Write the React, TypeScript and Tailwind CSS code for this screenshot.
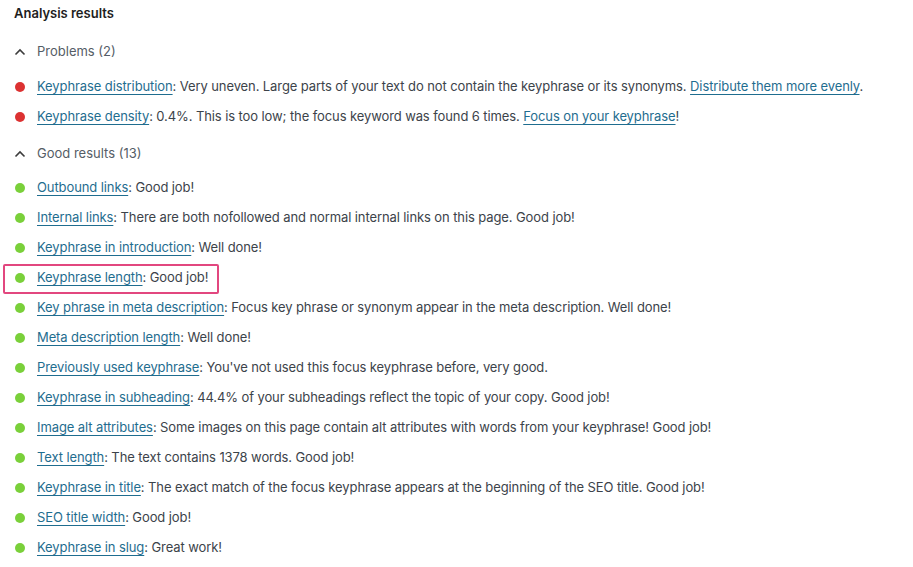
import React from "react";

type Item = { link: string; text: React.ReactNode; highlight?: boolean };

const L = ({ children }: { children: React.ReactNode }) => (
  <a className="text-[#1f6d8f] underline underline-offset-[3px] decoration-[1px]">{children}</a>
);

const problems: Item[] = [
  {
    link: "Keyphrase distribution",
    text: (
      <>
        : Very uneven. Large parts of your text do not contain the keyphrase or its synonyms.{" "}
        <L>Distribute them more evenly</L>.
      </>
    ),
  },
  {
    link: "Keyphrase density",
    text: (
      <>
        : 0.4%. This is too low; the focus keyword was found 6 times. <L>Focus on your keyphrase</L>!
      </>
    ),
  },
];

const good: Item[] = [
  { link: "Outbound links", text: ": Good job!" },
  { link: "Internal links", text: ": There are both nofollowed and normal internal links on this page. Good job!" },
  { link: "Keyphrase in introduction", text: ": Well done!" },
  { link: "Keyphrase length", text: ": Good job!", highlight: true },
  { link: "Key phrase in meta description", text: ": Focus key phrase or synonym appear in the meta description. Well done!" },
  { link: "Meta description length", text: ": Well done!" },
  { link: "Previously used keyphrase", text: ": You've not used this focus keyphrase before, very good." },
  { link: "Keyphrase in subheading", text: ": 44.4% of your subheadings reflect the topic of your copy. Good job!" },
  { link: "Image alt attributes", text: ": Some images on this page contain alt attributes with words from your keyphrase! Good job!" },
  { link: "Text length", text: ": The text contains 1378 words. Good job!" },
  { link: "Keyphrase in title", text: ": The exact match of the focus keyphrase appears at the beginning of the SEO title. Good job!" },
  { link: "SEO title width", text: ": Good job!" },
  { link: "Keyphrase in slug", text: ": Great work!" },
];

const Chevron = () => (
  <svg width="12" height="8" viewBox="0 0 12 8" className="ml-[14px] mr-[11px]">
    <path d="M1.5 6.5 L6 2 L10.5 6.5" fill="none" stroke="#3c3c3c" strokeWidth="1.6" />
  </svg>
);

const Row = ({ item, color }: { item: Item; color: string }) => (
  <div className="relative h-[30px] flex items-center">
    <span className={`ml-[15px] mr-[12px] w-[10px] h-[10px] rounded-full ${color}`} />
    <span className="text-[#3c434a] whitespace-nowrap tracking-[-0.1px]">
      <L>{item.link}</L>
      {item.text}
    </span>
    {item.highlight && (
      <div className="absolute left-[3px] top-[1px] w-[216px] h-[30px] border-2 border-[#e2477f] rounded-[2px]" />
    )}
  </div>
);

export default function App() {
  return (
    <div
      className="w-[913px] h-[567px] bg-white text-[13px] overflow-hidden pt-[1px]"
      style={{ fontFamily: "Inter, 'Noto Sans', sans-serif" }}
    >
      <div className="h-[26px] flex items-center pl-[14px] font-semibold text-[#1e1e1e]">Analysis results</div>
      <div className="mt-[10px] mb-[5px] h-[30px] flex items-center text-[#555d66]">
        <Chevron />
        <span>Problems (2)</span>
      </div>
      {problems.map((p) => (
        <Row key={p.link} item={p} color="bg-[#dc3232]" />
      ))}
      <div className="mt-[7px] mb-[4px] h-[30px] flex items-center text-[#555d66]">
        <Chevron />
        <span>Good results (13)</span>
      </div>
      {good.map((p) => (
        <Row key={p.link} item={p} color="bg-[#7ad03a]" />
      ))}
    </div>
  );
}
